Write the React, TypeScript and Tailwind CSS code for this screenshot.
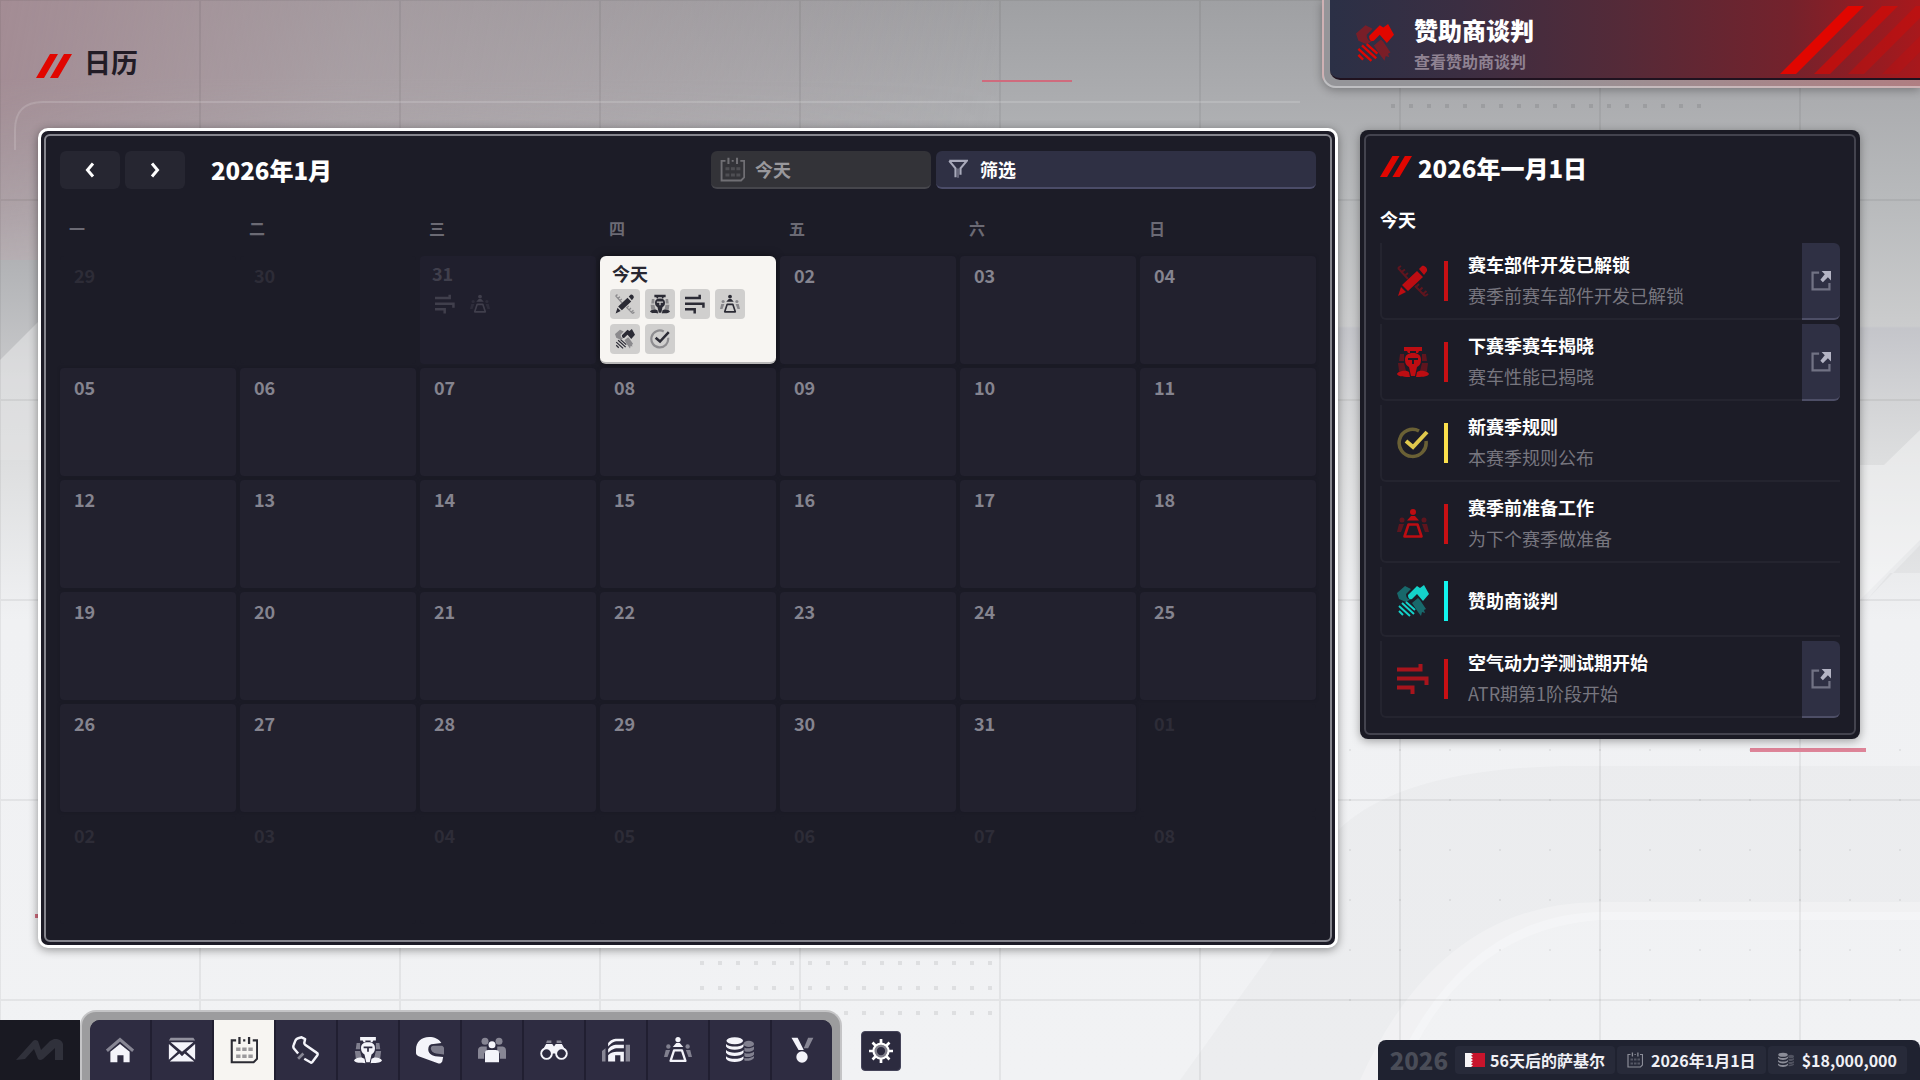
import React from 'react';

type IconProps = { className?: string };

const Svg: React.FC<{ className?: string; children: React.ReactNode }> = ({ className = 'size-7', children }) => (
  <svg viewBox="0 0 32 32" className={className} fill="currentColor" aria-hidden="true">
    {children}
  </svg>
);

const HomeIcon = (p: IconProps) => (
  <Svg {...p}>
    <path d="M1 17 16 4l15 13" fill="none" stroke="currentColor" strokeWidth="3.5" opacity=".45" />
    <path d="M5 18 16 9l11 9v12h-7v-8h-7v8H5z" />
  </Svg>
);

const MailIcon = (p: IconProps) => (
  <Svg {...p}>
    <path d="M3 2h26l2 3H1z" opacity=".5" />
    <path d="M3 7h26L16 18zM1 9l10 9-10 9zM31 9l-10 9 10 9zM2 29l11-9 3 3 3-3 11 9z" />
  </Svg>
);

const CalendarIcon = (p: IconProps) => (
  <Svg {...p}>
    <path d="M7 5H2v25h25l4-4V5h-5M15 5h2.500" fill="none" stroke="currentColor" strokeWidth="2.400" />
    <path d="M9.500 1h2.600v8H9.500zM20.500 1h2.600v8h-2.600z" />
    <path d="M7 13h5v4H7zM14 13h5v4h-5zM21 13h5v4h-5zM7 21h5v4H7zM14 21h5v4h-5zM21 21h5v4h-5z" opacity=".45" />
  </Svg>
);

const TrackIcon = (p: IconProps) => (
  <Svg {...p}>
    <path
      d="M7 20 2 14q-1-2 0-4l2-5q1-2 3-2.500L11 1.500l4 2L14 8q0 1 1 2l13 9q2 1 1 3l-6 8q-1 1-2 0l-7-4"
      fill="none"
      stroke="currentColor"
      strokeWidth="2.800"
      strokeLinejoin="round"
    />
    <path d="M7 26l6-6" stroke="currentColor" strokeWidth="3" opacity=".45" />
  </Svg>
);

const CarIcon = (p: IconProps) => (
  <Svg {...p}>
    <path d="M3 8h4v7H2zM25 8h4l1 7h-5zM1 17h6l2 8H2zM25 17h6l-1 8h-7z" opacity=".42" />
    <path d="M7 1h18v4h-3l-1 2h-2V5h-6v2h-2l-1-2H7z" />
    <path
      fillRule="evenodd"
      d="M16 7c5 0 8 2 8 7 0 4-2 6-4 7l-2 9h-4l-2-9c-2-1-4-3-4-7 0-5 3-7 8-7zM11 12v2h4v4h2v-4h4v-2z"
    />
    <path d="M0 28c1-3 7-4 10-3l2 1 1 5c-4 0-12 0-13-3zM32 28c-1-3-7-4-10-3l-2 1-1 5c4 0 12 0 13-3z" />
  </Svg>
);

const HelmetIcon = (p: IconProps) => (
  <Svg {...p}>
    <path d="M29 8C26 3 21 1 15 1 6 1 0 7 0 15v4c0 2 1 3 3 4l22 8c2 1 4 0 5-2l1-5-9-1c-5-1-8-4-8-8 0-4 2-6 6-6z" />
    <path d="M20 11h10l2 2v8l-9-1c-4-1-6-3-6-6 0-2 1-3 3-3z" opacity=".4" />
  </Svg>
);

const PeopleIcon = (p: IconProps) => (
  <Svg {...p}>
    <g opacity=".45">
      <circle cx="8" cy="6" r="4" />
      <circle cx="24" cy="6" r="4" />
      <path d="M0 17c0-4 2-5 5-5h5v5l-3 3v6H0zM32 17c0-4-2-5-5-5h-5v5l3 3v6h7z" />
    </g>
    <circle cx="16" cy="10" r="4" />
    <path d="M8 20c0-3 1-4 4-4h8c3 0 4 1 4 4v10H8z" />
  </Svg>
);

const BinocularsIcon = (p: IconProps) => (
  <Svg {...p}>
    <path d="M8 5h5v3H7zM19 5h5l1 3h-6z" opacity=".45" />
    <path d="M7 9h7l2 3 2-3h7l5 9H20v2h-8v-2H2z" />
    <circle cx="7.500" cy="20" r="6" fill="none" stroke="currentColor" strokeWidth="2.400" />
    <circle cx="24.500" cy="20" r="6" fill="none" stroke="currentColor" strokeWidth="2.400" />
    <path d="M2.700 20a4.800 4.800 0 1 0 9.600 0a4.800 4.800 0 1 0-9.600 0M19.700 20a4.800 4.800 0 1 0 9.600 0a4.800 4.800 0 1 0-9.600 0" fill="#2d2b40" />
  </Svg>
);

const BuildingIcon = (p: IconProps) => (
  <Svg {...p}>
    <path d="M0 17l4-3v15H0zM27 10h5v19h-5z" opacity=".45" />
    <path d="M7 8c3-4 6-5 10-5h8v3h-7c-5 0-7 2-11 6zM7 15c3-4 6-5 10-5h8v4h-7c-5 0-7 2-11 5z" />
    <path d="M7 22c3-3 6-4 10-4h8v11h-4v-7h-6v7H7z" />
  </Svg>
);

const MeetingIcon = (p: IconProps) => (
  <Svg {...p}>
    <circle cx="16" cy="4" r="3" />
    <path d="M14 8h4l4 4.500H10z" />
    <path d="M11.500 16.500h9l4 12h-17z" fill="none" stroke="currentColor" strokeWidth="2.600" strokeLinejoin="round" />
    <g opacity=".42">
      <circle cx="5" cy="12" r="2.500" />
      <circle cx="27" cy="12" r="2.500" />
      <path d="M2 16h5l-3 8H0zM30 16h-5l3 8h4z" />
    </g>
  </Svg>
);

const CoinsIcon = (p: IconProps) => (
  <Svg {...p}>
    <g opacity=".42">
      <ellipse cx="26" cy="9" rx="6" ry="3.500" />
      <path d="M21 13c3 2 8 1 11-1v3c-2 3-8 4-11 2zM21 19c3 2 8 1 11-1v3c-2 3-8 4-11 2zM21 25c3 1 8 0 11-2v2c-2 3-8 4-11 3z" />
    </g>
    <ellipse cx="10" cy="5.500" rx="9.500" ry="4" />
    <path d="M0 9c4 4 16 4 20 0v3c-3 5-17 5-20 0zM0 16c4 4 16 4 20 0v3c-3 5-17 5-20 0zM0 23c4 4 16 4 20 0v3c-3 5-17 5-20 0z" />
  </Svg>
);

const MedalIcon = (p: IconProps) => (
  <Svg {...p}>
    <path d="M23 2h6l-6 12h-5z" opacity=".45" />
    <path d="M4 2h7l7 14h-6z" />
    <circle cx="16" cy="24" r="6.500" />
  </Svg>
);

const GearIcon = (p: IconProps) => (
  <Svg {...p}>
    <g stroke="currentColor" fill="none">
      <circle cx="16" cy="16" r="10" strokeWidth="3" />
      <path
        d="M16 0v6M16 26v6M0 16h6M26 16h6M4.700 4.700l4.200 4.200M23.100 23.100l4.200 4.200M27.300 4.700l-4.200 4.200M8.900 23.100l-4.200 4.200"
        strokeWidth="3.600"
      />
      <circle cx="16" cy="16" r="7" strokeWidth="3" opacity=".4" />
    </g>
  </Svg>
);

const PencilIcon = (p: IconProps) => (
  <Svg {...p}>
    <path
      d="M1 3 11 14M1 3 4 1M4.500 7 8 4.500M8 10.500 11 8M18 21l10 10M19 22l3-3M22.500 25.500l3-3M26 29l3.500-3M28 31l3-2"
      fill="none"
      stroke="currentColor"
      strokeWidth="2"
      opacity=".42"
    />
    <path d="M20 6 26 12 11 26 5 20zM4 22l5 5-8 4zM22 4l3-3c2-1 6 2 5 5l-3 4z" />
  </Svg>
);

const WindIcon = (p: IconProps) => (
  <Svg {...p}>
    <path d="M0 6.500h23.500V1M0 15.500h29.500V22M0 24.500h15.500V31" fill="none" stroke="currentColor" strokeWidth="4" />
  </Svg>
);

const HandshakeIcon = (p: IconProps) => (
  <Svg {...p}>
    <path d="M0 8l8-7 6 3-5 5c0 4 2 6 5 5l-5 3-7-3zM15 18l6-5 2 2 6 9-2 1 1 3-3-1-1 4-3-4z" opacity=".42" />
    <path d="M11 10 20 1l3 2 4-3 5 9-6 7-6-7-5 5c-2 1-4 0-4-4z" />
    <path d="M9 17l9 8M5 18l12 11M2 21l11 10M2 26l4 4" stroke="currentColor" strokeWidth="2" />
  </Svg>
);

const CheckIcon = (p: IconProps) => (
  <Svg {...p}>
    <path d="M22 4A13.500 13.500 0 1 0 29 14" fill="none" stroke="currentColor" strokeWidth="3.500" opacity=".4" />
    <path d="M9 14l7 6L30 5" fill="none" stroke="currentColor" strokeWidth="4" />
  </Svg>
);

const FunnelIcon = (p: IconProps) => (
  <Svg {...p}>
    <path d="M2 3h28L20 15v10M2 3l10 12v14" fill="none" stroke="currentColor" strokeWidth="3.400" />
    <path d="M16 15v15" stroke="currentColor" strokeWidth="2.500" opacity=".6" />
  </Svg>
);

const ExternalIcon = (p: IconProps) => (
  <Svg {...p}>
    <path d="M13 2.500H2.500v27h27V19" fill="none" stroke="currentColor" strokeWidth="3.600" opacity=".5" />
    <path d="M17 0h15v15l-5-5-8 8-4-4 7-9z" />
  </Svg>
);

const ChevronIcon: React.FC<{ flip?: boolean }> = ({ flip }) => (
  <svg viewBox="0 0 12 16" className="h-4 w-3" fill="none" stroke="currentColor" strokeWidth="3" aria-hidden="true">
    <path d={flip ? 'M3 1.500 8.500 8 3 14.500' : 'M9 1.500 3.500 8 9 14.500'} />
  </svg>
);

const Slashes = ({ className = '' }: IconProps) => (
  <svg viewBox="0 0 36 24" preserveAspectRatio="none" className={className} fill="#e10600" aria-hidden="true">
    <path d="M0 24 14 0h8L8 24zM14 24 28 0h8L22 24z" />
  </svg>
);

const TeamLogo = () => (
  <svg viewBox="0 0 48 22" className="h-[22px] w-12" fill="#30313b" aria-hidden="true">
    <path d="M0 21 17 2q2-2 5 0l3 9 9-9 4-2h3q5 1 6 5v16h-8V9L27 20q-3 2-5 0L18 10 9 20z" />
  </svg>
);

const BahrainFlag = () => (
  <svg viewBox="0 0 20 14" className="h-[14px] w-5" aria-hidden="true">
    <rect width="20" height="14" fill="#c8142c" />
    <path d="M0 0h6l2 1.400-2 1.400 2 1.400-2 1.400 2 1.400-2 1.400 2 1.400-2 1.400 2 1.400-2 1.400H0z" fill="#f6f4f6" />
  </svg>
);

const Backdrop = () => (
  <div className="absolute inset-0 overflow-hidden bg-[linear-gradient(180deg,#9fa0a3_0px,#aaabae_90px,#b8babc_200px,#cbcccd_326px,#c4c5ca_328px,#d3d4d6_400px,#dddedf_460px,#f0f1f3_620px,#f1f2f4_1080px)]">
    <div className="absolute top-0 left-0 h-[260px] w-[1000px] bg-[linear-gradient(100deg,#a38c94_0%,#a8989e99_35%,#a7979d00_100%)] [mask-image:linear-gradient(180deg,#000_30%,#0006_100%)]" />
    <div className="absolute top-[260px] left-0 h-[200px] w-10 bg-[linear-gradient(180deg,#b1b2b5_0%,#c9cacc_60%,#d0d1d3_100%)]" />
    <svg className="absolute inset-0 size-full" aria-hidden="true">
      <defs>
        <pattern id="grid" width="200" height="200" patternUnits="userSpaceOnUse" x="100" y="100">
          <path d="M100 0v200M0 100h200" stroke="#000" strokeOpacity=".06" strokeWidth="2" />
        </pattern>
        <pattern id="dots" width="18" height="25" patternUnits="userSpaceOnUse" x="700" y="961">
          <rect width="4" height="4" fill="#000" fillOpacity=".08" />
        </pattern>
        <pattern id="specks" width="50" height="50" patternUnits="userSpaceOnUse" x="49" y="49">
          <rect width="2" height="2" fill="#000" fillOpacity=".06" />
        </pattern>
      </defs>
      <path d="M0 360 40 320V460H0z" fill="#fff" opacity=".35" />
      <path d="M1860 465h24l36-35v110l-60 60z" fill="#fff" opacity=".35" />
      <path d="M1865 602 1920 545v28h-30z" fill="#000" opacity=".03" />
      <path d="M1338 830Q1400 770 1560 766H1920v146H1600Q1460 916 1390 1080H1180L1338 860z" fill="#000" opacity=".018" />
      <path d="M1360 1080Q1440 902 1600 902H1920v18H1600Q1460 930 1400 1080z" fill="#fff" opacity=".25" />
      <rect width="100%" height="100%" fill="url(#grid)" />
      <rect x="1340" y="740" width="580" height="270" fill="url(#specks)" />
      <rect x="700" y="961" width="292" height="54" fill="url(#dots)" />
      <path d="M1391 106h310" stroke="#000" strokeOpacity=".09" strokeWidth="4" strokeDasharray="4 14" />
      <path d="M15 150v-20q0-28 28-28H1300" stroke="#fff" strokeOpacity=".15" strokeWidth="2" fill="none" />
      <path d="M982 81h90" stroke="#cf6b7d" strokeWidth="2" />
      <path d="M1750 750h116" stroke="#dd8498" strokeWidth="4" />
      <path d="M35 916h4" stroke="#cf6b7d" strokeWidth="4" />
    </svg>
  </div>
);

const weekdays = ['一', '二', '三', '四', '五', '六', '日'];

const days = Array.from({ length: 42 }, (_, i) => {
  const offset = i - 2;
  if (offset < 1) return { n: offset + 31, outside: true };
  if (offset > 31) return { n: offset - 31, outside: true };
  return { n: offset, outside: false };
});

const todayIcons = [PencilIcon, CarIcon, WindIcon, MeetingIcon, HandshakeIcon, CheckIcon];

const DayCell: React.FC<{ index: number }> = ({ index }) => {
  const day = days[index];
  const label = String(day.n).padStart(2, '0');

  // 1 Jan falls on the fourth column
  if (index === 3) {
    return (
      <button
        type="button"
        className="flex h-[108px] flex-col items-start gap-[5px] rounded-md border-b-2 border-[#b9b8b8] bg-[#f7f5f2] px-[10px] pt-[6px] shadow-[0_0_8px_rgba(0,0,0,0.5)]"
      >
        <span className="px-[2px] text-lg leading-[22px] font-bold text-[#282731]">今天</span>
        <span className="grid grid-cols-4 gap-[5px] text-[#2b2b35]">
          {todayIcons.map((Icon, i) => (
            <span key={i} className="flex size-[30px] items-center justify-center rounded-sm bg-[#d0cfce]">
              <Icon className="size-5" />
            </span>
          ))}
        </span>
      </button>
    );
  }

  if (index === 2) {
    return (
      <button type="button" className="flex h-[108px] flex-col items-start gap-[5px] rounded-sm bg-[#201f2d] px-[10px] pt-[6px] text-[#403f4c]">
        <span className="px-[2px] text-lg leading-[22px] font-bold">{label}</span>
        <span className="flex gap-[5px]">
          <span className="flex size-[30px] items-center justify-center">
            <WindIcon className="size-5" />
          </span>
          <span className="flex size-[30px] items-center justify-center">
            <MeetingIcon className="size-5" />
          </span>
        </span>
      </button>
    );
  }

  return (
    <button
      type="button"
      className={`flex h-[108px] items-start rounded-sm px-[14px] pt-2 text-lg leading-[22px] font-bold ${
        day.outside ? 'bg-[#1c1c27] text-[#2d2c37]' : 'bg-[#22212e] text-[#85848f] shadow-[0_0_3px_#191923]'
      }`}
    >
      {label}
    </button>
  );
};

const CalendarPanel = () => (
  <section className="flex-1 rounded-[10px] border-[3px] border-white bg-[#1c1b26] p-[3px] shadow-[0_2px_10px_rgba(0,0,0,0.4)]">
    <div className="rounded-md border-2 border-[#85858d] bg-[#1c1c27] px-[14px] pt-[14px] pb-4">
      <div className="flex items-center gap-[5px]">
        <button type="button" aria-label="上个月" className="flex h-[38px] w-[60px] items-center justify-center rounded-md bg-[#262631] text-white">
          <ChevronIcon />
        </button>
        <button type="button" aria-label="下个月" className="flex h-[38px] w-[60px] items-center justify-center rounded-md bg-[#262631] text-white">
          <ChevronIcon flip />
        </button>
        <h2 className="ml-[21px] flex-1 text-2xl leading-10 font-black text-white">2026年1月</h2>
        <button type="button" className="flex h-[38px] w-[220px] items-center gap-[10px] rounded-md border-b-2 border-[#46464c] bg-[#333338] px-[9px] text-lg font-bold text-[#99989c]">
          <CalendarIcon className="size-[25px] opacity-60" />
          今天
        </button>
        <button type="button" className="flex h-[38px] w-[380px] items-center gap-3 rounded-md border-b-2 border-[#4b4c68] bg-[#2f3044] px-3 text-lg font-bold text-white">
          <FunnelIcon className="size-5 text-[#a9aabb]" />
          筛选
        </button>
      </div>
      <div className="mt-[26px] grid grid-cols-7 gap-1">
        {weekdays.map((w) => (
          <div key={w} className="px-[9px] text-base leading-6 font-bold text-[#6b6a74]">{w}</div>
        ))}
      </div>
      <div className="mt-4 grid grid-cols-7 gap-1">
        {days.map((_, i) => (
          <DayCell key={i} index={i} />
        ))}
      </div>
    </div>
  </section>
);

interface EventItem {
  icon: React.FC<IconProps>;
  title: string;
  detail?: string;
  tone: string;
  bar: string;
  link?: boolean;
}

const events: EventItem[] = [
  { icon: PencilIcon, title: '赛车部件开发已解锁', detail: '赛季前赛车部件开发已解锁', tone: 'text-[#bd0d12]', bar: 'bg-[#c81014]', link: true },
  { icon: CarIcon, title: '下赛季赛车揭晓', detail: '赛车性能已揭晓', tone: 'text-[#bd0d12]', bar: 'bg-[#c81014]', link: true },
  { icon: CheckIcon, title: '新赛季规则', detail: '本赛季规则公布', tone: 'text-[#e0c84c]', bar: 'bg-[#fbe04c]' },
  { icon: MeetingIcon, title: '赛季前准备工作', detail: '为下个赛季做准备', tone: 'text-[#bd0d12]', bar: 'bg-[#c81014]' },
  { icon: HandshakeIcon, title: '赞助商谈判', tone: 'text-[#14d2ca]', bar: 'bg-[#12f4ee]' },
  { icon: WindIcon, title: '空气动力学测试期开始', detail: 'ATR期第1阶段开始', tone: 'text-[#a8141c]', bar: 'bg-[#c81014]', link: true },
];

const EventRow: React.FC<{ event: EventItem }> = ({ event }) => {
  const Icon = event.icon;
  return (
    <li className={`flex items-stretch ${event.detail ? 'h-[77px]' : 'h-[70px]'}`}>
      <div className="flex flex-1 items-center rounded-bl-md border-b-2 border-l-2 border-[#24242f] pl-[15px]">
        <Icon className={`size-8 ${event.tone}`} />
        <span className={`ml-[15px] h-10 w-1 ${event.bar}`} />
        <div className="ml-5 pb-[2px] text-lg leading-[31px]">
          <p className="font-bold text-white">{event.title}</p>
          {event.detail && <p className="text-[#77767f]">{event.detail}</p>}
        </div>
      </div>
      {event.link && (
        <a href="#" aria-label={event.title} className="flex w-[38px] items-center justify-center rounded-r-md border-b-2 border-[#4d4e66] bg-[#2f3044] text-[#b4b4c4]">
          <ExternalIcon className="size-5" />
        </a>
      )}
    </li>
  );
};

const AgendaPanel = () => (
  <aside className="mt-[2px] w-[500px] shrink-0 rounded-lg bg-[#1a1a24] p-1 shadow-[0_2px_10px_rgba(0,0,0,0.35)]">
    <div className="rounded-md border-2 border-[#43434e] bg-[#1c1c27] px-[14px] pt-3 pb-[15px]">
      <h2 className="flex items-center gap-[6px] text-2xl leading-10 font-black text-white">
        <Slashes className="mb-1 h-[21px] w-8" />
        2026年一月1日
      </h2>
      <h3 className="mt-5 text-lg leading-[22px] font-bold text-white">今天</h3>
      <ul className="mt-[13px] flex flex-col gap-1">
        {events.map((event) => (
          <EventRow key={event.title} event={event} />
        ))}
      </ul>
    </div>
  </aside>
);

const SponsorBanner = () => (
  <a
    href="#"
    className="h-[88px] w-[598px] rounded-bl-[14px] border-b-2 border-l-2 border-white/40 bg-[linear-gradient(90deg,#959599_30%,#b07e82_100%)] pb-[6px] pl-[6px] shadow-[0_2px_10px_rgba(0,0,0,0.3)]"
  >
    <div className="relative flex h-20 items-center overflow-hidden rounded-bl-[10px] border-b-2 border-[#20121f] bg-[linear-gradient(90deg,#2b3046_0%,#3b2e42_22%,#552a38_50%,#74222c_78%,#a8181c_100%)] pt-2 pl-[26px]">
      <HandshakeIcon className="size-[38px] text-[#e10600]" />
      <div className="ml-5">
        <p className="text-2xl leading-9 font-black text-white">赞助商谈判</p>
        <p className="text-base leading-[26px] font-bold text-[#8f8292]">查看赞助商谈判</p>
      </div>
      <svg viewBox="0 0 140 68" className="absolute top-[6px] right-0 h-[68px] w-[140px]" fill="#e10600" aria-hidden="true">
        <path d="M0 68 68 0h16L16 68z" />
        <path d="M34 68 102 0h16L50 68z" opacity=".6" />
        <path d="M68 68 136 0h16L84 68z" opacity=".35" />
        <path d="M102 68 170 0h16l-68 68z" opacity=".2" />
      </svg>
    </div>
  </a>
);

const navItems = [
  { label: '主页', icon: HomeIcon },
  { label: '邮件', icon: MailIcon },
  { label: '日历', icon: CalendarIcon, active: true },
  { label: '赛道', icon: TrackIcon },
  { label: '赛车', icon: CarIcon },
  { label: '车手', icon: HelmetIcon },
  { label: '员工', icon: PeopleIcon },
  { label: '球探', icon: BinocularsIcon },
  { label: '设施', icon: BuildingIcon },
  { label: '董事会', icon: MeetingIcon },
  { label: '财务', icon: CoinsIcon },
  { label: '积分榜', icon: MedalIcon },
];

const BottomNav = () => (
  <div className="flex items-end">
    <div className="flex h-[60px] w-20 items-center justify-center bg-[#191922]">
      <TeamLogo />
    </div>
    <nav className="rounded-t-[16px] border-2 border-b-0 border-[#c4c4c6] bg-[#9c9c9e] px-2 pt-2">
      <div className="flex gap-[2px] overflow-hidden rounded-t-[10px] bg-[#211f31]">
        {navItems.map(({ label, icon: Icon, active }) => (
          <button
            key={label}
            type="button"
            aria-label={label}
            className={`flex h-[60px] w-[60px] items-center justify-center ${
              active ? 'bg-[#f7f5f2] text-[#2b2b33]' : 'bg-[#2e2c41] text-[#f4f4fa]'
            }`}
          >
            <Icon className="size-7" />
          </button>
        ))}
      </div>
    </nav>
    <button type="button" aria-label="设置" className="mb-[9px] ml-[19px] flex size-10 items-center justify-center rounded-[4px] border border-[#45445a] bg-[#2c2b3f] text-white">
      <GearIcon className="size-6" />
    </button>
  </div>
);

const StatusBar = () => (
  <div className="flex h-10 items-center rounded-t-lg bg-[#1f2230] pr-[13px] pl-3 text-base font-bold text-[#f0f0f5]">
    <span className="text-2xl leading-7 font-black text-[#4a4d58]">2026</span>
    <span className="ml-[7px] flex h-7 items-center gap-[5px] rounded-sm bg-[#272a39] px-[10px]">
      <BahrainFlag />
      56天后的萨基尔
    </span>
    <span className="ml-[2px] flex h-7 items-center gap-2 rounded-sm bg-[#272a39] px-[10px]">
      <CalendarIcon className="size-4 text-[#8b8d98]" />
      2026年1月1日
    </span>
    <span className="ml-[2px] flex h-7 items-center gap-2 rounded-sm bg-[#272a39] px-[10px]">
      <CoinsIcon className="size-4 text-[#8b8d98]" />
      $18,000,000
    </span>
  </div>
);

export default function App() {
  return (
    <div className="relative min-h-screen font-['Noto_Sans_CJK_SC',sans-serif]">
      <Backdrop />
      <div className="relative flex min-h-screen flex-col">
        <header className="flex items-start justify-between pl-9">
          <h1 className="mt-[42px] flex items-center gap-3 text-[27px] leading-10 font-bold text-[#221c26]">
            <Slashes className="mt-2 h-6 w-9" />
            日历
          </h1>
          <SponsorBanner />
        </header>
        <main className="mt-10 flex items-start gap-[22px] pr-[60px] pl-[38px]">
          <CalendarPanel />
          <AgendaPanel />
        </main>
        <footer className="mt-auto flex items-end justify-between">
          <BottomNav />
          <StatusBar />
        </footer>
      </div>
    </div>
  );
}
